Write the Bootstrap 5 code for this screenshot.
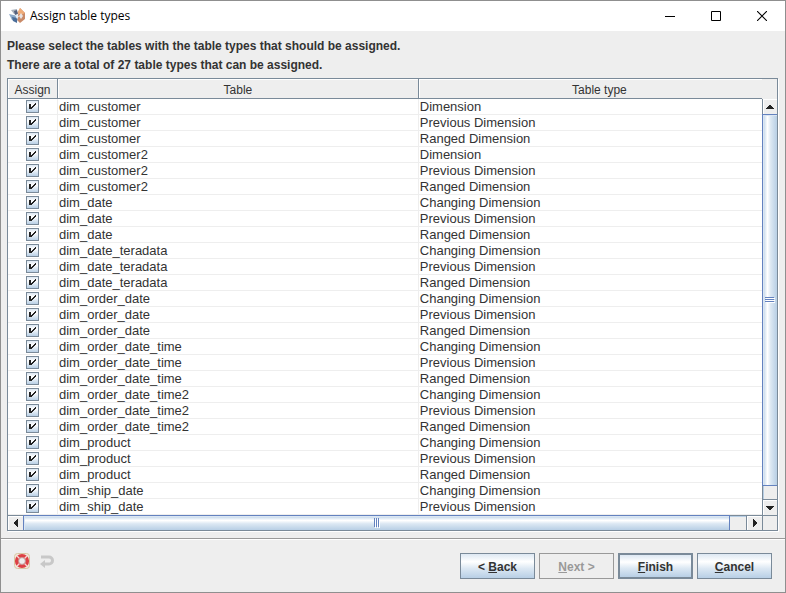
<!DOCTYPE html>
<html lang="en">
<head>
<meta charset="utf-8">
<meta name="viewport" content="width=device-width, initial-scale=1">
<title>Assign table types</title>
<link href="https://cdn.jsdelivr.net/npm/bootstrap@5.3.0/dist/css/bootstrap.min.css" rel="stylesheet">
<style>
:root{--steel:#7a8a99;--blue:#6382bf;--panel:#eee;--ink:#333}
body{font-family:"Liberation Sans",Arial,sans-serif;font-size:12px;line-height:16px;color:var(--ink);background:var(--panel)}
svg{display:block}
.window{border:1px solid #8f8f8f}
.titlebar{height:30px;background:#fff;color:#000;font-family:"Open Sans",sans-serif;padding-left:8px}
.titlebar h1{font-size:12px;line-height:16px;font-weight:400;margin:0 0 0 4px}
.win-btn{width:46px;height:30px;border:0;background:none;padding:0;display:grid;place-items:center}
.intro{padding:6px 6px 3px;line-height:19px}
.intro p{margin:0}
.pane{margin:0 7px 7px 6px;border:1px solid var(--steel);box-shadow:1px 1px #fff;display:grid;grid-template-columns:1fr 15px;grid-template-rows:auto 15px}
.grid-table{table-layout:fixed;width:100%;background:#fff;font-size:13px;border-collapse:separate;border-spacing:0}
.grid-table th{height:20px;padding:2px 0 0;font-size:12px;font-weight:400;text-align:center;background:var(--panel);border-right:1px solid var(--steel);border-bottom:1px solid var(--steel);box-shadow:inset 1px 1px #fff}
.grid-table th:last-child{border-right:0;padding-left:18px}
.grid-table td{height:16px;line-height:15px;padding:0 0 0 1px;border-right:1px solid var(--panel);border-bottom:1px solid var(--panel);white-space:nowrap;overflow:hidden}
.grid-table td:first-child{padding:0}
.grid-table td:last-child{border-right:0}
.col-assign{width:50px}
.col-name{width:47.85%}
.tick{appearance:none;display:block;width:13px;height:13px;margin:0 auto;border:1px solid var(--steel);background:linear-gradient(#dde8f3,#fff 35%,#b8cfe5)}
.tick:checked{background:url("data:image/svg+xml,%3Csvg xmlns='http://www.w3.org/2000/svg' viewBox='0 0 11 11' shape-rendering='crispEdges'%3E%3Cpath fill='%23222' d='M2 3h2v3h1v-1h1v-1h1v-1h1v-1h1v2h-1v1h-1v1h-1v1h-1v1H2z'/%3E%3C/svg%3E"),linear-gradient(#dde8f3,#fff 35%,#b8cfe5)}
.vbar{padding-top:20px}
.vbar-inner{border-left:1px solid var(--steel)}
.hbar{border-top:1px solid var(--steel)}
.arrow{border:0;padding:0;background:var(--panel);display:grid;place-items:center;box-shadow:inset 1px 1px #fff;color:#222}
.vbar .arrow{height:15px}
.hbar .arrow{width:15px}
.vthumb{border:solid var(--blue);border-width:1px 0 1px 1px;margin-left:-1px;background:linear-gradient(90deg,#b8cfe5,#dce8f3 15%,#fff 32%,#dce8f3 55%,#b8cfe5);box-shadow:inset 1px 1px #dbe6f3}
.hthumb{border:solid var(--blue);border-width:1px 1px 0;margin-top:-1px;background:linear-gradient(#b8cfe5,#dce8f3 15%,#fff 32%,#dce8f3 55%,#b8cfe5);box-shadow:inset 1px 1px #dbe6f3}
.vtrack{height:14px;border-bottom:1px solid var(--steel);box-shadow:inset 1px 0 #b8cfe5}
.htrack{width:17px;border-right:1px solid var(--steel);box-shadow:inset 0 1px #b8cfe5}
.corner{border-left:1px solid var(--steel);border-top:1px solid var(--steel)}
.footer-bar{border-top:1px solid #9a9a9a;box-shadow:inset 0 1px #fff;padding:14px 13px 13px}
.tool{width:17px;height:17px;padding:0;border:0;background:none}
.metal{width:75px;height:26px;padding:2px 0 0;border:1px solid var(--steel);border-radius:0;font-size:12px;line-height:16px;font-weight:700;color:var(--ink);background:linear-gradient(#dde8f3,#fff 32%,#dce8f3 60%,#b8cfe5)}
.metal:hover{color:var(--ink);border-color:var(--steel)}
.metal.primary{border-width:2px}
.metal:disabled{background:var(--panel);color:#999;border-color:#999;opacity:1}
</style>
</head>
<body>
<main class="window d-flex flex-column min-vh-100">
<header class="titlebar d-flex align-items-center">
<svg width="17" height="16" viewBox="0 0 17 16" aria-hidden="true"><path fill="#c98a68" d="M11 0l5 5v6l-5 4-3-3 1-5z"/><path fill="#f0ac78" d="M11 0l5 5-4 2-4-2z"/><path fill="#e8e4e4" d="M12 5l2 3-2 3-2-3z"/><path fill="#a9b1bd" d="M2 2l6-1v4L5 6z"/><path fill="#55617d" d="M5 3l3-1 1 4-3 1z"/><path fill="#8ba9c9" d="M0 6l9 2-1 6-5-2z"/><path fill="#4a6d99" d="M3 9l5 1v5l-4-2z"/><path fill="#e6edf5" d="M6 7l4 1-2 3z"/></svg>
<h1 class="me-auto">Assign table types</h1>
<button class="win-btn" aria-label="Minimize"><svg width="10" height="10"><path d="M0 5.500h10" stroke="#000"/></svg></button>
<button class="win-btn" aria-label="Maximize"><svg width="10" height="10"><path d="M.5.5h9v9h-9z" fill="none" stroke="#000"/></svg></button>
<button class="win-btn" aria-label="Close"><svg width="10" height="10"><path d="M0 0l10 10M10 0L0 10" stroke="#000" stroke-width="1.1"/></svg></button>
</header>
<div class="intro fw-bold"><p>Please select the tables with the table types that should be assigned.</p><p>There are a total of 27 table types that can be assigned.</p></div>
<section class="pane">
<table class="grid-table">
<colgroup><col class="col-assign"><col class="col-name"><col></colgroup>
<thead><tr><th scope="col">Assign</th><th scope="col">Table</th><th scope="col">Table type</th></tr></thead>
<tbody id="rows"></tbody>
</table>
<div class="vbar d-flex flex-column"><div class="vbar-inner d-flex flex-column flex-grow-1">
<button class="arrow" aria-label="Scroll up"><svg width="8" height="4" shape-rendering="crispEdges"><path fill="currentColor" d="M3 0h2v1h1v1h1v1h1v1H0V3h1V2h1V1h1z"/></svg></button>
<div class="vthumb flex-grow-1 d-grid"><svg class="m-auto" width="10" height="6" shape-rendering="crispEdges"><path d="M1 1.500h9M1 3.500h9M1 5.500h9" stroke="#fff"/><path d="M0 .5h9M0 2.500h9M0 4.500h9" stroke="#6382bf"/></svg></div>
<div class="vtrack"></div>
<button class="arrow" aria-label="Scroll down"><svg width="8" height="4" shape-rendering="crispEdges"><path fill="currentColor" d="M0 0h8v1H7v1H6v1H5v1H3V3H2V2H1V1H0z"/></svg></button>
</div></div>
<div class="hbar d-flex">
<button class="arrow" aria-label="Scroll left"><svg width="4" height="8" shape-rendering="crispEdges"><path fill="currentColor" d="M4 0v8H3V7H2V6H1V5H0V3h1V2h1V1h1V0z"/></svg></button>
<div class="hthumb flex-grow-1 d-grid"><svg class="m-auto" width="6" height="10" shape-rendering="crispEdges"><path d="M1.500 1v9M3.500 1v9M5.500 1v9" stroke="#fff"/><path d="M.5 0v9M2.500 0v9M4.500 0v9" stroke="#6382bf"/></svg></div>
<div class="htrack"></div>
<button class="arrow" aria-label="Scroll right"><svg width="4" height="8" shape-rendering="crispEdges"><path fill="currentColor" d="M0 0v8h1V7h1V6h1V5h1V3H3V2H2V1H1V0z"/></svg></button>
</div>
<div class="corner"></div>
</section>
<footer class="footer-bar d-flex align-items-start flex-grow-1">
<div class="d-flex gap-2">
<button class="tool" aria-label="Help"><svg width="17" height="17" viewBox="0 0 17 17"><rect x=".5" y=".5" width="15" height="15" rx="3" fill="#f0e9de" stroke="#d8c6a2"/><circle cx="8" cy="8" r="5.300" fill="none" stroke="#dd4044" stroke-width="3.600"/><path d="M3 3l3 3M13 3l-3 3M3 13l3-3M13 13l-3-3" stroke="#f6d5d3" stroke-width="1.400"/><circle cx="8" cy="8" r="3.400" fill="#eee" stroke="#a86a68" stroke-width=".6"/></svg></button>
<button class="tool" aria-label="Undo" disabled><svg width="17" height="17" viewBox="0 0 17 17"><path d="M2 4h8a3.200 3.200 0 0 1 0 7H5" fill="none" stroke="#c8c8c8" stroke-width="3"/><path fill="#c8c8c8" d="M6 7v8l-5-4z"/></svg></button>
</div>
<div class="d-flex gap-1 ms-auto">
<button class="btn metal">&lt; <u>B</u>ack</button>
<button class="btn metal" disabled><u>N</u>ext &gt;</button>
<button class="btn metal primary"><u>F</u>inish</button>
<button class="btn metal"><u>C</u>ancel</button>
</div>
</footer>
</main>
<script src="https://cdn.jsdelivr.net/npm/bootstrap@5.3.0/dist/js/bootstrap.bundle.min.js"></script>
<script>
const tables = [
  ["dim_customer", "Dimension"], ["dim_customer2", "Dimension"],
  ["dim_date", "Changing Dimension"], ["dim_date_teradata", "Changing Dimension"],
  ["dim_order_date", "Changing Dimension"], ["dim_order_date_time", "Changing Dimension"],
  ["dim_order_date_time2", "Changing Dimension"], ["dim_product", "Changing Dimension"],
  ["dim_ship_date", "Changing Dimension"]
];
const visibleRows = 26;
document.getElementById("rows").innerHTML = tables
  .flatMap(([name, first]) => [first, "Previous Dimension", "Ranged Dimension"].map(type => [name, type]))
  .slice(0, visibleRows)
  .map(([name, type]) => `<tr><td><input class="tick" type="checkbox" checked aria-label="Assign ${type} to ${name}"></td><td>${name}</td><td>${type}</td></tr>`)
  .join("");
</script>
</body>
</html>
